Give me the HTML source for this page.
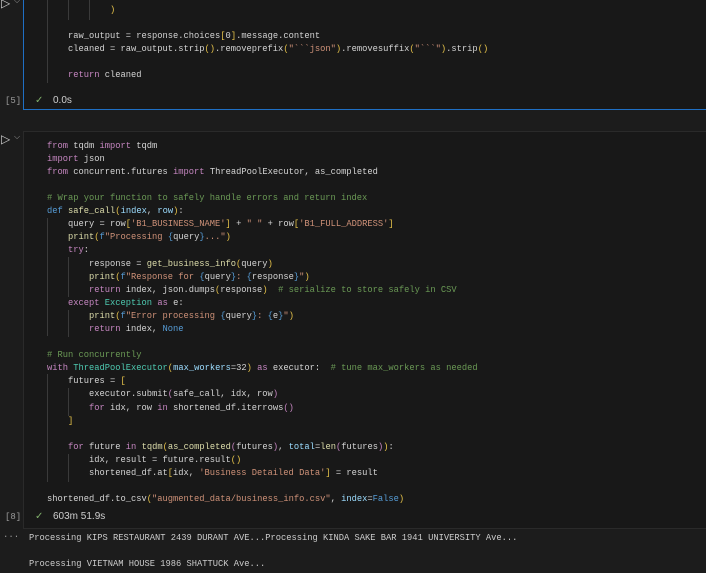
<!DOCTYPE html>
<html><head><meta charset="utf-8"><style>
body{margin:0;width:706px;height:573px;background:#1c1c1c;overflow:hidden;position:relative;font-family:"Liberation Mono",monospace;font-size:8.75px;color:#d4d4d4}
.l{position:absolute;white-space:pre;line-height:13px;height:13px}
.k{color:#c586c0}.s{color:#ce9178}.c{color:#6a9955}.f{color:#dcdcaa}.v{color:#9cdcfe}.t{color:#4ec9b0}.b{color:#569cd6}.y{color:#e5c24a}.p{color:#c586c0}
.cell{position:absolute;left:23px;right:-2px;background:#181818}
.g{position:absolute;width:1px;background:#3a3a3a}
.st{position:absolute;font-family:"Liberation Sans",sans-serif;font-size:10px;color:#cfcfcf}
.ex{position:absolute;font-size:9px;color:#9a9a9a}
</style></head><body>
<div class="cell" style="top:-5px;height:113px;border:1px solid #1f6fc4"></div>
<div class="cell" style="top:131px;height:396px;border:1px solid #2a2a2a"></div>
<div class="st" style="left:1px;top:-4px;color:#ccc;font-size:12px">▷</div>
<div class="st" style="left:14px;top:-4px;color:#999;font-size:8px">⌵</div>
<div class="g" style="left:68px;top:0;height:20px"></div>
<div class="g" style="left:89px;top:0;height:20px"></div>
<div class="g" style="left:47px;top:0;height:83px"></div>
<div class="l" style="left:110px;top:4px"><span class="y">)</span></div>
<div class="l" style="left:68px;top:30px">raw_output = response.choices<span class="y">[</span>0<span class="y">]</span>.message.content</div>
<div class="l" style="left:68px;top:43px">cleaned = raw_output.strip<span class="y">()</span>.removeprefix<span class="y">(</span><span class="s">"&#96;&#96;&#96;json"</span><span class="y">)</span>.removesuffix<span class="y">(</span><span class="s">"&#96;&#96;&#96;"</span><span class="y">)</span>.strip<span class="y">()</span></div>
<div class="l" style="left:68px;top:69px"><span class="k">return</span> cleaned</div>
<div class="ex" style="left:5px;top:96px">[5]</div>
<div class="st" style="left:35px;top:95px;color:#7fae6a">✓</div>
<div class="st" style="left:53px;top:95px">0.0s</div>

<div class="st" style="left:1px;top:132px;color:#ccc;font-size:12px">▷</div>
<div class="st" style="left:14px;top:132px;color:#999;font-size:8px">⌵</div>
<div class="g" style="left:47px;top:218px;height:118px"></div>
<div class="g" style="left:68px;top:257px;height:40px"></div>
<div class="g" style="left:68px;top:310px;height:27px"></div>
<div class="g" style="left:47px;top:374px;height:108px"></div>
<div class="g" style="left:68px;top:388px;height:28px"></div>
<div class="g" style="left:68px;top:454px;height:28px"></div>

<div class="l" style="left:47px;top:140px"><span class="k">from</span> tqdm <span class="k">import</span> tqdm</div>
<div class="l" style="left:47px;top:153px"><span class="k">import</span> json</div>
<div class="l" style="left:47px;top:166px"><span class="k">from</span> concurrent.futures <span class="k">import</span> ThreadPoolExecutor, as_completed</div>
<div class="l" style="left:47px;top:192px"><span class="c"># Wrap your function to safely handle errors and return index</span></div>
<div class="l" style="left:47px;top:205px"><span class="b">def</span> <span class="f">safe_call</span><span class="y">(</span><span class="v">index</span>, <span class="v">row</span><span class="y">)</span>:</div>
<div class="l" style="left:68px;top:218px">query = row<span class="y">[</span><span class="s">'B1_BUSINESS_NAME'</span><span class="y">]</span> + <span class="s">" "</span> + row<span class="y">[</span><span class="s">'B1_FULL_ADDRESS'</span><span class="y">]</span></div>
<div class="l" style="left:68px;top:231px"><span class="f">print</span><span class="y">(</span><span class="b">f</span><span class="s">"Processing </span><span class="b">{</span>query<span class="b">}</span><span class="s">..."</span><span class="y">)</span></div>
<div class="l" style="left:68px;top:244px"><span class="k">try</span>:</div>
<div class="l" style="left:89px;top:258px">response = <span class="f">get_business_info</span><span class="y">(</span>query<span class="y">)</span></div>
<div class="l" style="left:89px;top:271px"><span class="f">print</span><span class="y">(</span><span class="b">f</span><span class="s">"Response for </span><span class="b">{</span>query<span class="b">}</span><span class="s">: </span><span class="b">{</span>response<span class="b">}</span><span class="s">"</span><span class="y">)</span></div>
<div class="l" style="left:89px;top:284px"><span class="k">return</span> index, json.dumps<span class="y">(</span>response<span class="y">)</span>  <span class="c"># serialize to store safely in CSV</span></div>
<div class="l" style="left:68px;top:297px"><span class="k">except</span> <span class="t">Exception</span> <span class="k">as</span> e:</div>
<div class="l" style="left:89px;top:310px"><span class="f">print</span><span class="y">(</span><span class="b">f</span><span class="s">"Error processing </span><span class="b">{</span>query<span class="b">}</span><span class="s">: </span><span class="b">{</span>e<span class="b">}</span><span class="s">"</span><span class="y">)</span></div>
<div class="l" style="left:89px;top:323px"><span class="k">return</span> index, <span class="b">None</span></div>
<div class="l" style="left:47px;top:349px"><span class="c"># Run concurrently</span></div>
<div class="l" style="left:47px;top:362px"><span class="k">with</span> <span class="t">ThreadPoolExecutor</span><span class="y">(</span><span class="v">max_workers</span>=32<span class="y">)</span> <span class="k">as</span> executor:  <span class="c"># tune max_workers as needed</span></div>
<div class="l" style="left:68px;top:375px">futures = <span class="y">[</span></div>
<div class="l" style="left:89px;top:388px">executor.submit<span class="p">(</span>safe_call, idx, row<span class="p">)</span></div>
<div class="l" style="left:89px;top:402px"><span class="k">for</span> idx, row <span class="k">in</span> shortened_df.iterrows<span class="p">()</span></div>
<div class="l" style="left:68px;top:415px"><span class="y">]</span></div>
<div class="l" style="left:68px;top:441px"><span class="k">for</span> future <span class="k">in</span> <span class="f">tqdm</span><span class="y">(</span><span class="f">as_completed</span><span class="p">(</span>futures<span class="p">)</span>, <span class="v">total</span>=<span class="f">len</span><span class="p">(</span>futures<span class="p">)</span><span class="y">)</span>:</div>
<div class="l" style="left:89px;top:454px">idx, result = future.result<span class="y">()</span></div>
<div class="l" style="left:89px;top:467px">shortened_df.at<span class="y">[</span>idx, <span class="s">'Business Detailed Data'</span><span class="y">]</span> = result</div>
<div class="l" style="left:47px;top:493px">shortened_df.to_csv<span class="y">(</span><span class="s">"augmented_data/business_info.csv"</span>, <span class="v">index</span>=<span class="b">False</span><span class="y">)</span></div>
<div class="ex" style="left:5px;top:512px">[8]</div>
<div class="st" style="left:35px;top:511px;color:#7fae6a">✓</div>
<div class="st" style="left:53px;top:511px">603m 51.9s</div>

<div class="ex" style="left:3px;top:532px">···</div>
<div class="l" style="left:29px;top:532px;color:#cccccc">Processing KIPS RESTAURANT 2439 DURANT AVE...Processing KINDA SAKE BAR 1941 UNIVERSITY Ave...</div>
<div class="l" style="left:29px;top:558px;color:#cccccc">Processing VIETNAM HOUSE 1986 SHATTUCK Ave...</div>
</body></html>
